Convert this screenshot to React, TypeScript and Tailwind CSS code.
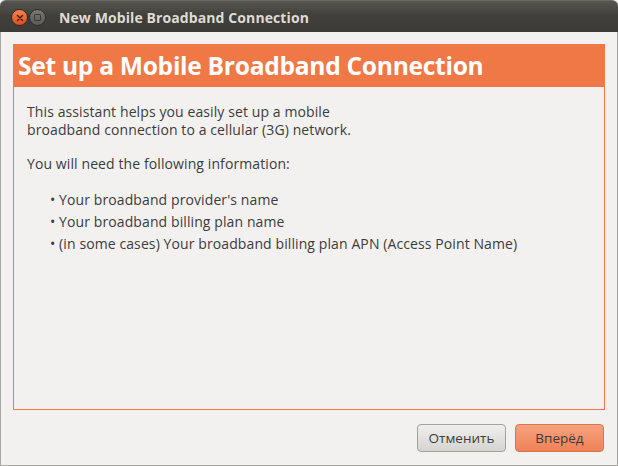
import React from "react";

export default function App() {
  const font = { fontFamily: '"Open Sans", "Noto Sans", "DejaVu Sans", sans-serif' };
  return (
    <div className="w-[618px] h-[466px] bg-[#f2f1f0] flex flex-col overflow-hidden" style={font}>
      {/* Title bar */}
      <div className="h-[32px] shrink-0 rounded-t-[6px] bg-gradient-to-b from-[#57554f] via-[#403f3b] to-[#3c3b37] border-t border-[#6b6963] flex items-center">
        <div className="ml-[11px] mt-[2px] w-[17px] h-[17px] rounded-full bg-gradient-to-b from-[#f7844e] to-[#df4a16] border border-[#2e2d2a] flex items-center justify-center">
          <svg width="8" height="8" viewBox="0 0 8 8">
            <path d="M1.5 1.5 L6.5 6.5 M6.5 1.5 L1.5 6.5" stroke="#3a1a0c" strokeWidth="1.4" strokeLinecap="round" />
          </svg>
        </div>
        <div className="ml-[1px] mt-[2px] w-[17px] h-[17px] rounded-full bg-gradient-to-b from-[#7a7873] to-[#5b5a55] border border-[#2e2d2a] flex items-center justify-center">
          <div className="w-[7px] h-[7px] border border-[#3a3935] rounded-[1px]" />
        </div>
        <span className="ml-[13px] mt-[1px] text-[14px] font-bold text-[#dfdbd2] tracking-[0.1px]">New Mobile Broadband Connection</span>
      </div>
      {/* Body */}
      <div className="flex-1 flex flex-col border-l border-r border-b border-[#a7a6a2] px-[12px] pt-[12px]">
        <div className="h-[366px] border border-[#f07746] flex flex-col">
          <div className="h-[42px] bg-[#f07746] flex items-center pl-[4px]">
            <span className="text-[24.6px] font-bold text-white leading-none tracking-[-0.3px]">Set up a Mobile Broadband Connection</span>
          </div>
          <div className="pl-[13px] pt-[16px] text-[14px] text-[#3c3c3c] leading-[18px] tracking-[0.1px]">
            <p>This assistant helps you easily set up a mobile<br />broadband connection to a cellular (3G) network.</p>
            <p className="mt-[16px]">You will need the following information:</p>
            <ul className="mt-[18px] pl-[23px] flex flex-col gap-[4px]">
              <li>• Your broadband provider's name</li>
              <li>• Your broadband billing plan name</li>
              <li>• (in some cases) Your broadband billing plan APN (Access Point Name)</li>
            </ul>
          </div>
        </div>
        <div className="flex justify-end gap-[9px] mt-[14px] pr-[1px]">
          <button className="w-[89px] h-[28px] rounded-[4px] border border-[#a5a29d] bg-gradient-to-b from-[#f0efed] to-[#d6d4d0] text-[13.5px] text-[#3c3c3c]">Отменить</button>
          <button className="w-[89px] h-[28px] rounded-[4px] border border-[#d9764f] bg-gradient-to-b from-[#f5a27e] to-[#ef8157] text-[13.5px] text-[#3c3c3c]">Вперёд</button>
        </div>
      </div>
    </div>
  );
}
